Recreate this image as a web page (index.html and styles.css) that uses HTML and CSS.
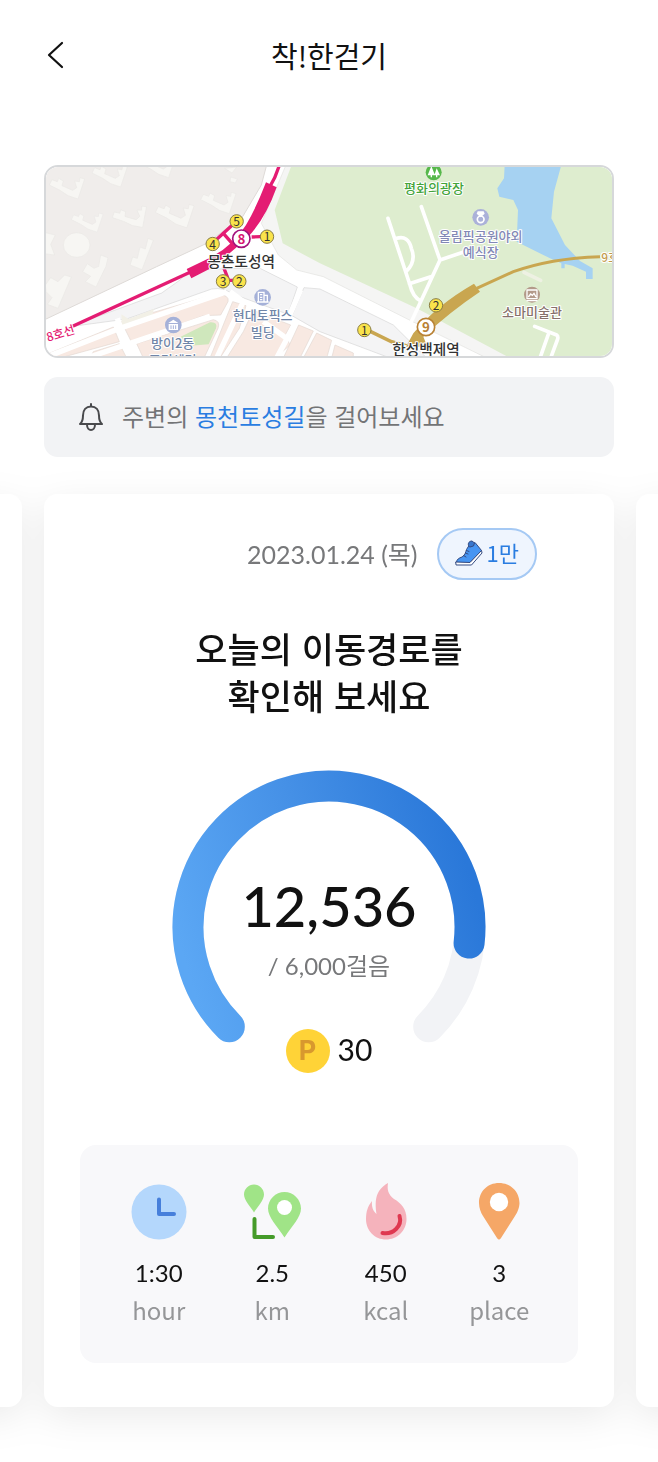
FILE: index.html
```html
<!DOCTYPE html>
<html lang="ko">
<head>
<meta charset="utf-8">
<meta name="viewport" content="width=device-width, initial-scale=1">
<title>착!한걷기</title>
<link rel="stylesheet" href="styles.css">
</head>
<body>
<header class="topbar">
  <button class="back" type="button" aria-label="뒤로">
    <svg width="18" height="28" viewBox="0 0 18 28" fill="none" stroke="#111" stroke-width="2.2" stroke-linecap="round" stroke-linejoin="round"><path d="M15 2 2 14l13 12"/></svg>
  </button>
  <h1 class="title">착!한걷기</h1>
</header>
<main>
  <div class="intro">
    <div class="map">
      <svg viewBox="48 36 1698 567" role="img" aria-label="지도">
        <defs>
          <path id="bld" d="M0 22 8 6 24 12 28 2 42 10 38 24 70 38 82 30 76 10 90 12 92 0 106 4 86 64 56 54 32 38Z"/>
        </defs>
        <rect x="42" y="30" width="1710" height="579" fill="#fff"/>
        <path d="M42 30H710L694 90 638 185 530 265 380 335 42 495Z" fill="#f0edeb" stroke="#dedad7" stroke-width="3"/>
        <g fill="#f7f6f3" stroke="#eae8e5" stroke-width="2">
          <use href="#bld" x="58" y="68"/><use href="#bld" x="186" y="32"/><use href="#bld" x="330" y="4"/><use href="#bld" x="512" y="112"/>
          <use href="#bld" transform="translate(376 148) scale(1.1)"/>
          <use href="#bld" transform="translate(124 174) scale(.9)"/>
          <use href="#bld" transform="translate(244 166) rotate(-8)"/>
          <path d="M300 330 308 306 322 310 330 276 346 282 354 250 370 256 336 344Z"/>
          <path d="M158 350 172 326 192 340 206 334 212 300 234 308 228 334 198 396 166 380 182 364Z"/>
          <path d="M46 390 62 368 84 380 98 366 104 360 124 366 84 460 52 448 66 428 48 410Z"/>
          <path d="M42 232 76 240 62 268 74 300 42 296ZM584 40l36-4-14 18zM602 66l20 6-6 12-16-4z"/>
          <ellipse cx="140" cy="270" rx="40" ry="37"/>
        </g>
        <path d="M768 30 694 205 745 300 800 345 880 365 1140 496 1370 609H1752V30Z" fill="#f5f5f4" stroke="#e2e2e0" stroke-width="2"/>
        <path d="M785 30 734 165 758 265 870 325 1160 460 1440 609H1752V30Z" fill="#deedcf"/>
        <path d="M120 515 395 414 450 375 480 345 620 340 690 340 802 396 774 478 606 416Q580 396 545 402L290 492Z" fill="#f4f4f5" stroke="#d6d6d6" stroke-width="2"/>
        <path d="M822 398 870 402 1090 510 1190 609H1080L870 530 786 482Z" fill="#f4f4f5" stroke="#d6d6d6" stroke-width="2"/>
        <g stroke="#e3d8d2" stroke-width="2" fill="#f8e9e2">
          <path d="M60 594 250 516 268 560 90 609H42Z"/>
          <path d="M190 590 268 566 290 609H180Z"/>
          <path d="M274 500 560 417Q600 420 594 440L572 480 520 482 340 548 304 560Z"/>
          <path d="M320 566 550 494Q572 498 564 520L522 609H340Z"/>
          <path d="M608 440 648 452 628 520 570 609H540Z"/>
          <path d="M670 466 782 510 766 540 780 570 736 609H590L640 530Z"/>
          <path d="M806 510 850 528 810 609H760ZM860 534 905 556 890 609H820ZM915 570 970 594V609H905Z"/>
        </g>
        <path d="M274 478 296 492 372 462 364 492 292 518 276 510Z" fill="#f2f0e6"/>
        <path d="M452 545 540 502Q564 500 558 520L536 568 480 572Z" fill="#cfe7bc"/>
        <g fill="none" stroke="#fff" stroke-width="16">
          <path d="M262 490 304 609M42 609 270 520 590 410M170 609 540 484M600 410 640 440 560 609M812 405 780 478M700 500 770 550M798 500 740 609"/>
        </g>
        <path d="M1424 30 1422 70 1402 100 1408 125 1450 135 1464 165 1460 260 1560 310 1594 325V340H1604V327L1628 332 1668 350V372H1688V340L1650 318 1605 270 1564 190 1572 110 1594 30Z" fill="#a6d2f2"/>
        <g fill="none" stroke="#fff" stroke-width="11" stroke-linecap="round" stroke-linejoin="round">
          <path d="M1074 190 1140 390Q1148 425 1172 438M1100 250Q1135 240 1144 280 1160 320 1128 350M1138 386 1200 366M1174 155 1230 315M1230 315 1310 288M1230 315 1144 500"/>
          <path d="M1514 514 1580 540Q1586 545 1582 555L1562 609M1556 535 1530 609"/>
          <path d="M1482 352 1532 376" stroke="#eef1e3"/>
        </g>
        <path d="M128 514 480 352" stroke="#e41c73" stroke-width="10"/>
        <path d="M748 30Q738 66 718 98" fill="none" stroke="#e41c73" stroke-width="10"/>
        <path d="M708 82 740 97Q705 195 650 250 590 305 538 342L484 370 470 342 540 308Q610 272 648 210 680 155 708 82Z" fill="#e41c73"/>
        <path d="M548 264 618 200M580 235 615 275M665 246 710 244M580 335 596 376H628" fill="none" stroke="#e41c73" stroke-width="10"/>
        <path d="M1340 400 1450 350Q1560 310 1710 305" fill="none" stroke="#c9a650" stroke-width="9"/>
        <path d="M1332 386 1350 410Q1260 470 1180 545L1192 575H1128L1150 535Q1220 450 1332 386ZM1000 525 1088 568 1140 570 1084 554 1005 515Z" fill="#c9a650"/>
        <g class="map-exit">
          <circle cx="620" cy="199" r="20"/><circle cx="548" cy="267" r="20"/><circle cx="711" cy="245" r="20"/><circle cx="579" cy="379" r="20"/><circle cx="628" cy="379" r="20"/><circle cx="1218" cy="451" r="20"/><circle cx="1003" cy="525" r="20"/>
          <text x="620" y="213">5</text><text x="548" y="281">4</text><text x="711" y="259">1</text><text x="579" y="393">3</text><text x="628" y="393">2</text><text x="1218" y="465">2</text><text x="1003" y="539">1</text>
        </g>
        <circle cx="634" cy="251" r="26" fill="#fff" stroke="#a3127c" stroke-width="5"/>
        <text class="map-line" x="634" y="266" fill="#d81673">8</text>
        <circle cx="1188" cy="516" r="26" fill="#fff" stroke="#b98235" stroke-width="5"/>
        <text class="map-line" x="1188" y="531" fill="#b98235">9</text>
        <g class="map-label map-station"><text x="634" y="335">몽촌토성역</text><text x="1188" y="599">한성백제역</text></g>
        <g class="map-label map-poi">
          <text x="698" y="496">현대토픽스</text><text x="698" y="546">빌딩</text>
          <text x="428" y="580">방이2동</text><text x="428" y="630">주민센터</text>
        </g>
        <g class="map-label map-venue"><text x="1352" y="257">올림픽공원야외</text><text x="1352" y="306">예식장</text></g>
        <text class="map-label map-park" x="1212" y="115">평화의광장</text>
        <text class="map-label map-museum" x="1506" y="487">소마미술관</text>
        <text class="map-route map-route-8" x="54" y="560" transform="rotate(-17 54 560)">8호선</text>
        <text class="map-route map-route-9" x="1714" y="320">9호선</text>
        <circle cx="698" cy="427" r="25" fill="#a5b1d8"/>
        <path d="M685 441V412H702V441M702 421H712V441M681 441H716M690 419H697M690 427H697M690 434H697" fill="none" stroke="#fff" stroke-width="4"/>
        <circle cx="430" cy="510" r="25" fill="#a5b1d8"/>
        <path d="M415 504 430 494 445 504ZM416 507H444V525H416Z" fill="#fff"/><path d="M423 511V522M430 511V522M437 511V522" stroke="#a5b1d8" stroke-width="3"/>
        <circle cx="1352" cy="187" r="25" fill="#abb1d9"/>
        <circle cx="1352" cy="193" r="10" fill="none" stroke="#fff" stroke-width="5"/><path d="M1343 169H1361L1364 176 1352 187 1340 176Z" fill="#fff"/>
        <circle cx="1211" cy="52" r="24" fill="#57b84b"/>
        <path d="M1204 33 1193 61H1202V67H1206V61H1215ZM1220 40 1213 61H1218V67H1222V61H1230Z" fill="#fff"/>
        <circle cx="1506" cy="419" r="24" fill="#b39a8a"/>
        <path d="M1491 405H1521V431H1491ZM1495 426 1502 417 1507 421 1512 415 1518 426M1489 437H1523" fill="none" stroke="#fff" stroke-width="4"/>
      </svg>
    </div>
    <p class="notice">
      <svg class="bell" width="26" height="30" viewBox="0 0 26 30" fill="none" stroke="#48494c" stroke-width="2" stroke-linecap="round" stroke-linejoin="round"><path d="M13 2V4.500M2 22C5 19.500 5 17 5 13.500 5 8 8 4.500 13 4.500S21 8 21 13.500C21 17 21 19.500 24 22ZM9 22.500C9 26 11 28 13 28S17 26 17 22.500"/></svg>
      <span class="notice-text">주변의 <a class="place-link" href="#route">몽천토성길</a>을 걸어보세요</span>
    </p>
  </div>
  <div class="carousel">
    <div class="track">
    <div class="card" aria-hidden="true"></div>
    <section class="card" id="route">
      <div class="meta">
        <time class="date" datetime="2023-01-24">2023.01.24 (목)</time>
        <span class="badge">
          <svg width="28" height="28" viewBox="0 0 28 28" stroke="#344b82" stroke-linecap="round" stroke-linejoin="round"><path d="M1.500 22C1.500 19.500 4 18 7 17 10 15.500 10.500 12.500 11.500 9.500L14 5.500 20 2.500 26.500 10.500 15 22.500Z" fill="#4795f2"/><path d="M1 22 15 22.500 26.500 10.500 27 13 16.500 25H1.500Z" fill="#fff"/><path d="M13.500 5.500C12.500 3 14.500 1 17 1L19.500 3 18.500 6 15 7Z" fill="#3976cc"/><path d="M11.500 10.500 14 11.500M10.500 13 13 14M8.500 15.500 11 17" fill="none"/></svg>
          <span class="badge-text">1만</span>
        </span>
      </div>
      <h2 class="headline">오늘의 이동경로를<br>확인해 보세요</h2>
      <div class="gauge">
        <svg class="dial" width="314" height="273" viewBox="0 0 314 273" fill="none" stroke-width="31" stroke-linecap="round" aria-hidden="true">
          <defs><linearGradient id="arc" gradientUnits="userSpaceOnUse" x1="20" y1="215" x2="305" y2="130"><stop offset="0" stop-color="#5ba7f4"/><stop offset=".5" stop-color="#4590e6"/><stop offset="1" stop-color="#2a78d9"/></linearGradient></defs>
          <path d="M57.300 256.700A141 141 0 1 1 256.700 256.700" stroke="#f2f3f6"/>
          <path d="M57.300 256.700A141 141 0 1 1 297.100 173" stroke="url(#arc)"/>
        </svg>
        <div class="readout">
          <strong class="steps">12,536</strong>
          <span class="goal">/ 6,000걸음</span>
          <span class="points"><span class="coin">P</span><span>30</span></span>
        </div>
      </div>
      <ul class="stats">
        <li class="stat">
          <svg width="60" height="60" viewBox="0 0 60 60"><circle cx="30" cy="30" r="27.500" fill="#b4d7fc"/><path d="M30 17.500V32H45" fill="none" stroke="#467fdb" stroke-width="4" stroke-linecap="round" stroke-linejoin="round"/></svg>
          <b class="value">1:30</b><span class="unit">hour</span>
        </li>
        <li class="stat">
          <svg width="60" height="60" viewBox="0 0 60 60"><path d="M12 2.500C17.500 2.500 22 7 22 12.500 22 18 16 24 12 30.500 8 24 2 18 2 12.500 2 7 6.500 2.500 12 2.500Z" fill="#a0e487"/><path d="M42.500 10C51.500 10 59 17.500 59 26.500 59 35 50 44 42.500 55.500 35 44 26 35 26 26.500 26 17.500 33.500 10 42.500 10Z" fill="#a0e487"/><circle cx="42.500" cy="25.500" r="7.500" fill="#fff"/><path d="M12.500 37V55H31" fill="none" stroke="#459b29" stroke-width="4" stroke-linecap="round" stroke-linejoin="round"/></svg>
          <b class="value">2.5</b><span class="unit">km</span>
        </li>
        <li class="stat">
          <svg width="60" height="60" viewBox="0 0 60 60"><path d="M32 1C20 8 18.500 17 20.500 32 17 29 15.500 25 16 19 12 24 10 29 10 37 10 49 19 57.500 30 57.500S50.500 49 50.500 37C50.500 27 45 21 38 17 32 12 31 8 32 1Z" fill="#f5b3bc"/><path d="M43.500 34C46.500 44 37 53 26.500 51" fill="none" stroke="#df3850" stroke-width="4" stroke-linecap="round"/></svg>
          <b class="value">450</b><span class="unit">kcal</span>
        </li>
        <li class="stat">
          <svg width="60" height="60" viewBox="0 0 60 60"><path d="M30 1C41.500 1 50.500 9.500 50.500 21 50.500 26 48 31 46 34L32 56Q30 59 28 56L14 34C12 31 10 26 10 21 10 9.500 18.500 1 30 1Z" fill="#f5a767"/><circle cx="30" cy="20" r="9.200" fill="#fff"/></svg>
          <b class="value">3</b><span class="unit">place</span>
        </li>
      </ul>
    </section>
    <div class="card" aria-hidden="true"></div>
    </div>
  </div>
</main>
</body>
</html>
```
FILE: styles.css
```css
* { box-sizing: border-box; }

body {
  margin: 0;
  background: #fff;
  color: #111;
  font-family: Lato, "Noto Sans CJK KR", sans-serif;
}

h1, h2, p, ul { margin: 0; padding: 0; }

.topbar {
  display: grid;
  grid-template-columns: 48px 1fr 48px;
  align-items: center;
  height: 110px;
  padding: 0 32px;
}

.back {
  display: flex;
  align-items: center;
  justify-content: center;
  height: 48px;
  padding: 0;
  border: 0;
  background: none;
}

.title {
  font: 400 29px/40px "Noto Sans CJK KR", sans-serif;
  text-align: center;
}

.intro {
  display: flex;
  flex-direction: column;
  gap: 19px;
  padding: 55px 44px 0;
}

.map {
  overflow: hidden;
  border: 2px solid #d6d8da;
  border-radius: 14px;
}

.map svg { display: block; width: 100%; height: auto; }

.map text { font-family: "Noto Sans CJK KR", sans-serif; }

.map-label {
  font-size: 39px;
  font-weight: 500;
  text-anchor: middle;
  paint-order: stroke;
  stroke: #fff;
  stroke-width: 6px;
  stroke-linejoin: round;
}

.map-station { font-size: 44px; fill: #333; }
.map-poi { fill: #7186a8; }
.map-venue { fill: #8288b5; }
.map-park { fill: #43a43a; }
.map-museum { fill: #86716b; }

.map-exit circle { fill: #fae34b; stroke: #887c45; stroke-width: 3px; }
.map-exit text { font-size: 36px; text-anchor: middle; fill: #333; }
.map-line { font-size: 40px; font-weight: 700; text-anchor: middle; }

.map-route {
  font-size: 36px;
  font-weight: 500;
  paint-order: stroke;
  stroke: #fff;
  stroke-width: 6px;
}
.map-route-8 { fill: #e41c73; }
.map-route-9 { fill: #c39c4c; }

.notice {
  display: flex;
  align-items: center;
  gap: 18px;
  min-height: 80px;
  padding: 0 34px;
  border-radius: 14px;
  background: #f2f3f5;
  color: #737476;
  font: 400 24px/36px "Noto Sans CJK KR", sans-serif;
}

.notice-text { padding-bottom: 2px; }
.place-link { color: #2a7de1; text-decoration: none; }

.carousel {
  overflow: hidden;
  padding: 37px 0 55px;
}

.track {
  display: flex;
  justify-content: center;
  gap: 22px;
  filter: drop-shadow(0 10px 18px rgba(0, 0, 0, .08));
}

.card {
  flex: 0 0 calc(100% - 88px);
  padding: 34px 36px 44px;
  border-radius: 14px;
  background: #fff;
}

.meta {
  display: flex;
  align-items: center;
  justify-content: flex-end;
  gap: 19px;
  padding-right: 41px;
}

.date { color: #77787a; font-size: 25px; line-height: 36px; }

.badge {
  display: flex;
  align-items: center;
  gap: 4px;
  height: 52px;
  padding: 0 16px;
  border: 2px solid #a5c9f4;
  border-radius: 26px;
  background: #eff5fe;
  color: #2a7de1;
  font: 400 22px/32px "Noto Sans CJK KR", sans-serif;
}

.badge-text { padding-bottom: 4px; }

.headline {
  margin-top: 44px;
  font: 500 35px/47px "Noto Sans CJK KR", sans-serif;
  text-align: center;
}

.gauge {
  display: grid;
  justify-items: center;
  margin-top: 52px;
}

.dial, .readout { grid-area: 1 / 1; }

.readout {
  display: flex;
  flex-direction: column;
  align-items: center;
  padding-top: 100px;
}

.steps { font-size: 56px; font-weight: 500; line-height: 72px; }
.goal { margin-top: 6px; color: #77787a; font-size: 24px; line-height: 36px; }

.points {
  display: flex;
  align-items: center;
  gap: 8px;
  margin-top: 45px;
  font-size: 30px;
  line-height: 40px;
}

.points span + span { padding-bottom: 4px; }

.coin {
  display: grid;
  place-items: center;
  width: 44px;
  height: 44px;
  border-radius: 50%;
  background: #ffd337;
  color: #d8982e;
  font: 700 27px/44px Inter, sans-serif;
}

.stats {
  display: grid;
  grid-template-columns: repeat(4, 1fr);
  margin-top: 72px;
  padding: 37px 22px 35px;
  border-radius: 16px;
  background: #f8f8fa;
  list-style: none;
}

.stat { display: flex; flex-direction: column; align-items: center; }
.value { margin-top: 12px; font-size: 24px; font-weight: 400; line-height: 38px; }
.unit { color: #959698; font: 400 24px/36px "Noto Sans CJK KR", sans-serif; }
```
